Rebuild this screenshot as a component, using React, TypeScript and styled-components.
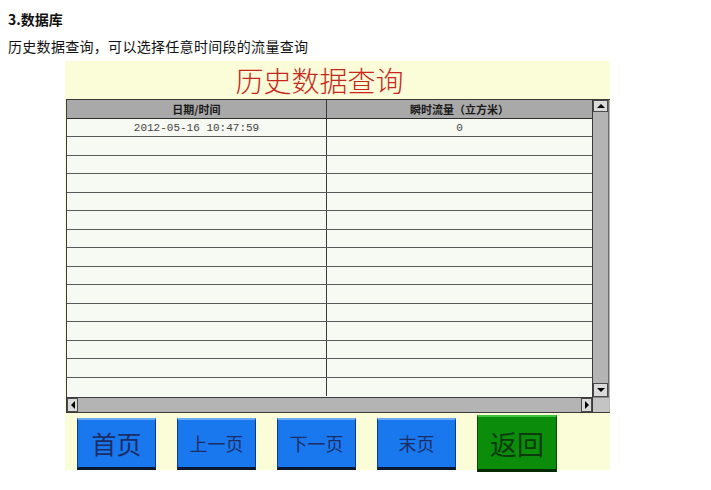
import styled, { createGlobalStyle } from "styled-components";

const GlobalStyle = createGlobalStyle`
  html, body {
    margin: 0;
    background: #ffffff;
  }
  body {
    font-family: "Noto Sans CJK SC", "Liberation Sans", sans-serif;
    color: #111;
  }
`;

const Page = styled.div`
  padding: 8px;
`;

const Heading = styled.div`
  font-size: 14px;
  font-weight: 700;
  line-height: 22px;
`;

const Intro = styled.div`
  margin-top: 5px;
  font-size: 14px;
  line-height: 22px;
  letter-spacing: 0.3px;
`;

const Panel = styled.div`
  margin: 4px 0 0 57px;
  width: 545px;
  height: 409px;
  background: #fbfcd8;
  display: flex;
  flex-direction: column;
`;

const Title = styled.div`
  height: 38px;
  padding-right: 36px;
  text-align: center;
  font-size: 28px;
  font-weight: 300;
  line-height: 39px;
  color: #c8261c;
`;

const TableFrame = styled.div`
  margin-left: 1px;
  width: 543px;
  display: grid;
  grid-template-columns: 526px 16px;
  grid-template-rows: 297px 15px;
  border: 1px solid #3a3a3a;
  border-right: none;
  background: #b9b9b9;
`;

const DataPane = styled.div`
  display: flex;
  flex-direction: column;
  border-right: 1px solid #3a3a3a;
  background: #f7f9f3;
  overflow: hidden;
`;

const Row = styled.div<{ $head?: boolean; $tall?: boolean }>`
  display: grid;
  grid-template-columns: 260px 1fr;
  height: ${(p) => (p.$head || p.$tall ? 19 : 18)}px;
  flex: none;
  box-sizing: border-box;
  border-bottom: 1px solid ${(p) => (p.$head ? "#2c2c2c" : "#5a5a5a")};
  background: ${(p) => (p.$head ? "#a9a9a9" : "#f7f9f3")};
  &:last-child {
    border-bottom: none;
  }
`;

const Cell = styled.div<{ $head?: boolean }>`
  display: flex;
  align-items: center;
  justify-content: center;
  font-size: 11px;
  font-weight: ${(p) => (p.$head ? 700 : 400)};
  font-family: ${(p) =>
    p.$head
      ? `"Noto Sans CJK SC", "Liberation Sans", sans-serif`
      : `"Liberation Mono", "DejaVu Sans Mono", monospace`};
  color: ${(p) => (p.$head ? "#1a1a1a" : "#444")};
  &:first-child {
    border-right: 1px solid #3a3a3a;
  }
`;

const VScroll = styled.div`
  display: flex;
  flex-direction: column;
  justify-content: space-between;
  background: #b4b4b4;
  border-right: 1px solid #6a6a6a;
`;

const HScroll = styled.div`
  display: flex;
  justify-content: space-between;
  align-items: stretch;
  border-top: 1px solid #3a3a3a;
  border-right: 1px solid #3a3a3a;
  background: #b4b4b4;
`;

const Corner = styled.div`
  background: #c4c4c4;
  border-top: 1px solid #8a8a8a;
`;

const ArrowButton = styled.div<{ $w: number; $h: number }>`
  width: ${(p) => p.$w}px;
  height: ${(p) => p.$h}px;
  display: flex;
  align-items: center;
  justify-content: center;
  background: #dadada;
  border: 1px solid #4a4a4a;
  box-sizing: border-box;
`;

const Arrow = ({ dir }: { dir: "up" | "down" | "left" | "right" }) => {
  const pts = {
    up: "1,6 5,2 9,6",
    down: "1,2 5,6 9,2",
    left: "6,1 2,5 6,9",
    right: "2,1 6,5 2,9",
  }[dir];
  const vertical = dir === "up" || dir === "down";
  return (
    <svg width={vertical ? 10 : 8} height={vertical ? 8 : 10}>
      <polygon points={pts} fill="#000" />
    </svg>
  );
};

const ButtonBar = styled.div`
  flex: 1;
  display: flex;
  align-items: center;
  gap: 21px;
  padding: 2px 0 0 12px;
`;

const PageButton = styled.button<{ $green?: boolean; $size: number }>`
  width: ${(p) => (p.$green ? 80 : 79)}px;
  height: ${(p) => (p.$green ? 57 : 52)}px;
  padding: 0;
  margin: 0;
  box-sizing: border-box;
  display: flex;
  align-items: center;
  justify-content: center;
  font-family: "Noto Sans CJK SC", "Liberation Serif", serif;
  font-size: ${(p) => p.$size}px;
  font-weight: 400;
  color: ${(p) => (p.$green ? "#0c3a0c" : "#1a2d66")};
  background: ${(p) => (p.$green ? "#0b8d0b" : "#1a78ee")};
  border-style: solid;
  border-width: 2px 1px 3px 1px;
  border-color: ${(p) =>
    p.$green
      ? "#3cc23c #064a06 #032a03 #064a06"
      : "#6aaaf5 #0d3d80 #0b1830 #0d3d80"};
  cursor: pointer;
`;

const rows = Array.from({ length: 15 }, (_, i) =>
  i === 0 ? { time: "2012-05-16 10:47:59", flow: "0" } : { time: "", flow: "" }
);

const buttons = [
  { label: "首页", size: 25 },
  { label: "上一页", size: 18 },
  { label: "下一页", size: 18 },
  { label: "末页", size: 18 },
  { label: "返回", size: 27, green: true },
];

export default function App() {
  return (
    <>
      <GlobalStyle />
      <Page>
        <Heading>3.数据库</Heading>
        <Intro>历史数据查询，可以选择任意时间段的流量查询</Intro>
        <Panel>
          <Title>历史数据查询</Title>
          <TableFrame>
            <DataPane>
              <Row $head>
                <Cell $head>日期/时间</Cell>
                <Cell $head>瞬时流量（立方米）</Cell>
              </Row>
              {rows.map((r, i) => (
                <Row key={i} $tall={i % 2 === 1}>
                  <Cell>{r.time}</Cell>
                  <Cell>{r.flow}</Cell>
                </Row>
              ))}
            </DataPane>
            <VScroll>
              <ArrowButton $w={15} $h={12}>
                <Arrow dir="up" />
              </ArrowButton>
              <ArrowButton $w={15} $h={14}>
                <Arrow dir="down" />
              </ArrowButton>
            </VScroll>
            <HScroll>
              <ArrowButton $w={11} $h={14}>
                <Arrow dir="left" />
              </ArrowButton>
              <ArrowButton $w={11} $h={14}>
                <Arrow dir="right" />
              </ArrowButton>
            </HScroll>
            <Corner />
          </TableFrame>
          <ButtonBar>
            {buttons.map((b) => (
              <PageButton key={b.label} $green={b.green} $size={b.size}>
                {b.label}
              </PageButton>
            ))}
          </ButtonBar>
        </Panel>
      </Page>
    </>
  );
}
